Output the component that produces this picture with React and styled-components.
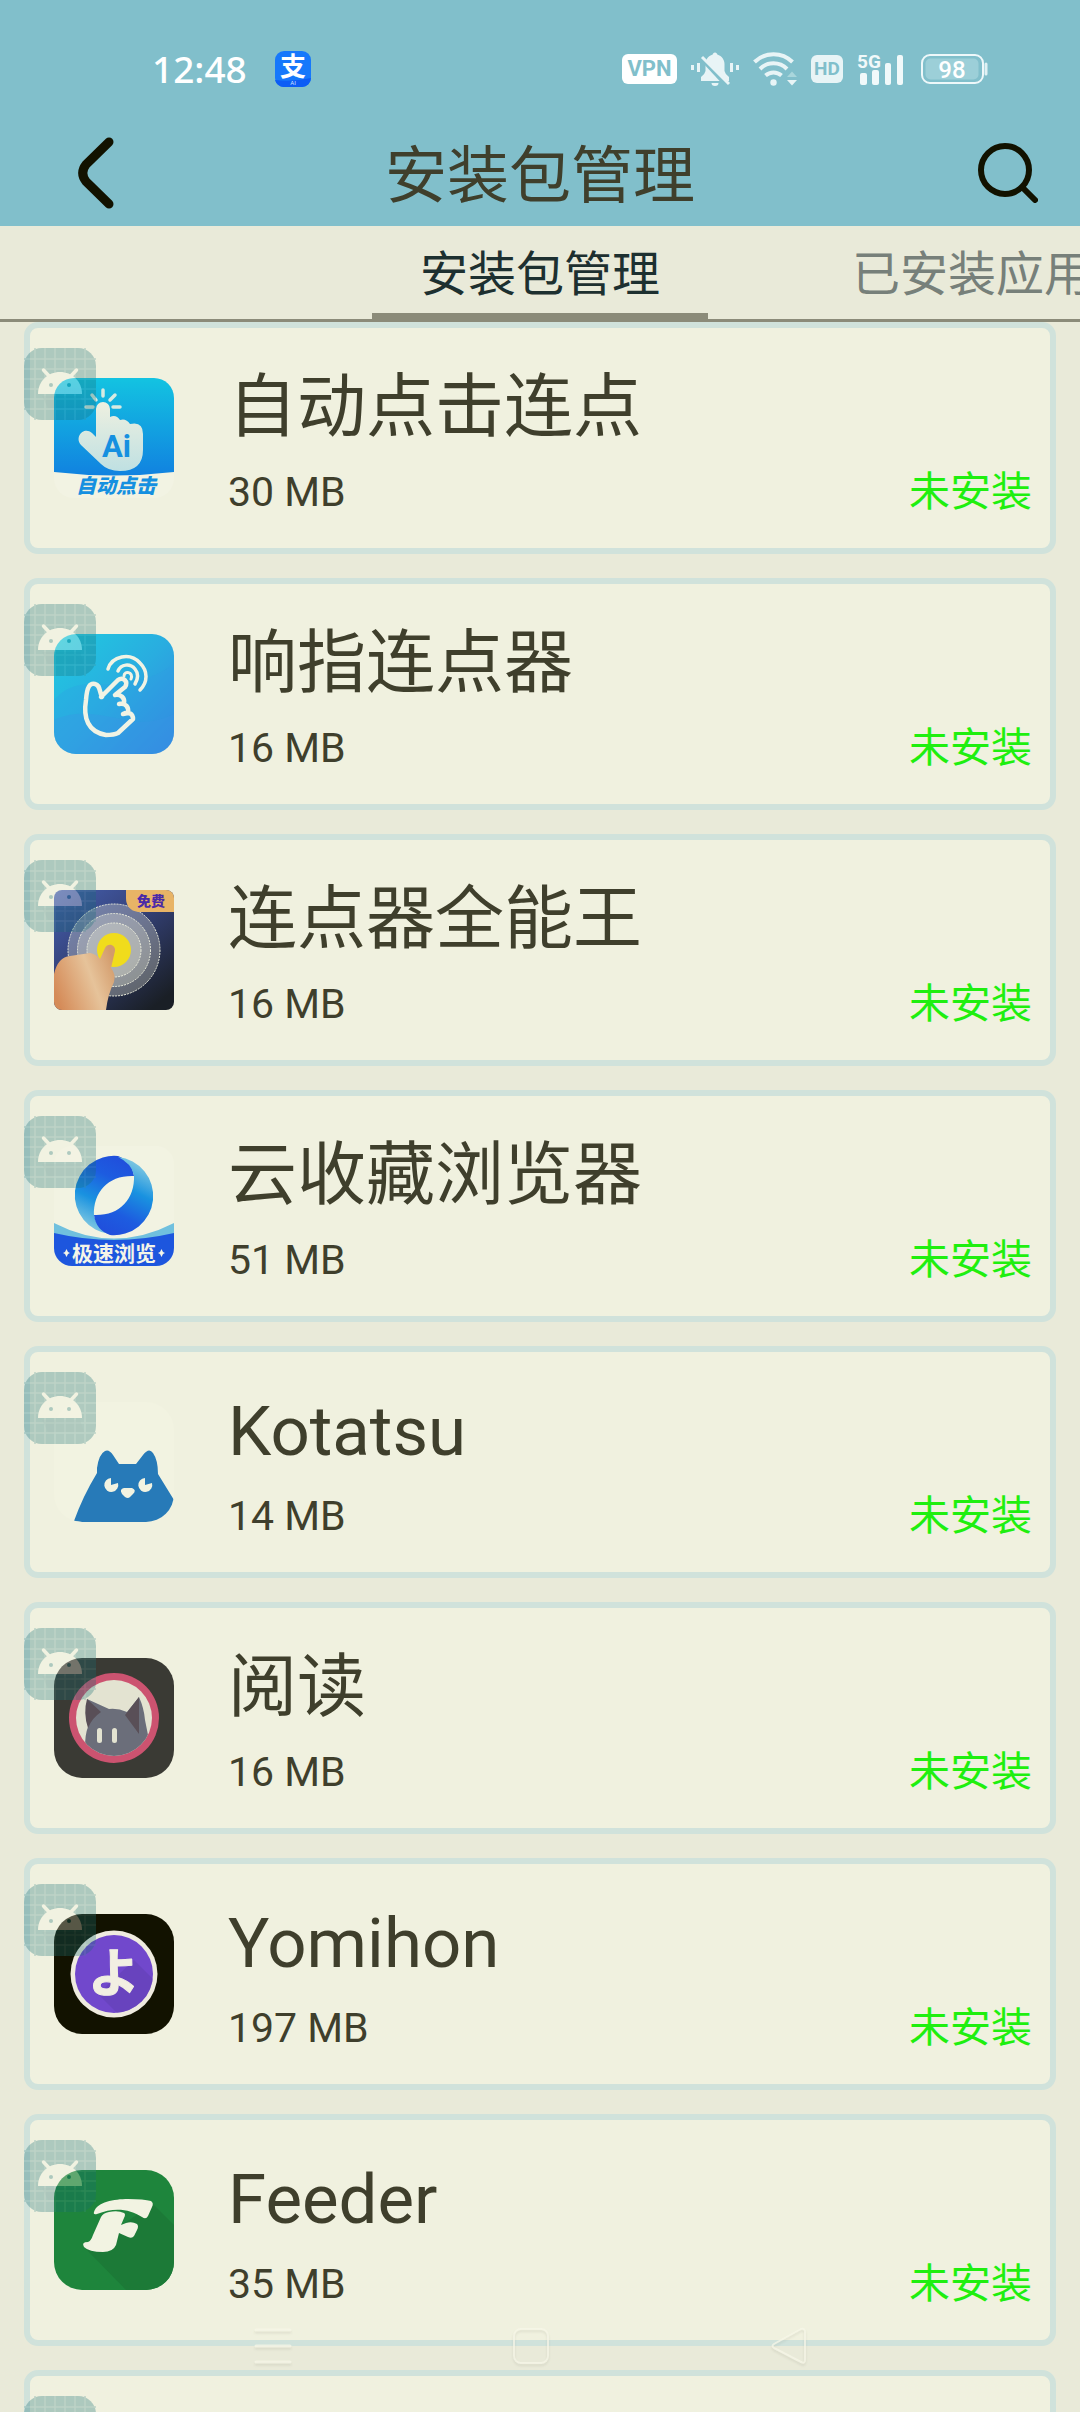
import React from "react";
import styled, { createGlobalStyle } from "styled-components";

const CJK = '"Noto Sans CJK SC"';
const SVG_FONT = 'Roboto, "Noto Sans CJK SC", sans-serif';

const GlobalStyle = createGlobalStyle`
  * {
    box-sizing: border-box;
  }
  body {
    margin: 0;
    background: #e9ead9;
    font-family: Roboto, ${CJK}, sans-serif;
    color: #3f3f2c;
  }
  button {
    border: 0;
    margin: 0;
    padding: 0;
    background: none;
    color: inherit;
    font: inherit;
    cursor: pointer;
  }
  svg {
    display: block;
  }
`;

const Screen = styled.div`
  display: flex;
  flex-direction: column;
  height: 100vh;
  overflow: hidden;
`;

const Header = styled.header`
  background: #81bfcb;
`;

const StatusBar = styled.div`
  display: flex;
  align-items: center;
  justify-content: space-between;
  height: 120px;
  padding: 18px 92px 0 152px;
  color: #fff;
`;

const StatusGroup = styled.div`
  display: flex;
  align-items: center;
  gap: ${(p) => p.$gap}px;
`;

const Clock = styled.time`
  font-family: "Noto Sans", ${CJK}, sans-serif;
  font-size: 37px;
  font-weight: 500;
  line-height: 40px;
`;

const StatusTag = styled.span`
  display: flex;
  align-items: center;
  justify-content: center;
  width: ${(p) => p.$width}px;
  height: ${(p) => p.$height}px;
  border-radius: 6px;
  background: ${(p) => p.$fill};
  color: #81bfcb;
  font-size: ${(p) => p.$text}px;
  font-weight: 700;
  line-height: 28px;
`;

const TitleBar = styled.div`
  display: grid;
  grid-template-columns: 1fr auto 1fr;
  align-items: center;
  height: 106px;
  padding: 0 42px;
`;

const Title = styled.h1`
  margin: 0;
  padding-top: 8px;
  font-size: 62px;
  font-weight: 400;
  line-height: 80px;
`;

const BackButton = styled.button`
  justify-self: start;
  padding-left: 36px;
`;

const SearchButton = styled.button`
  justify-self: end;
`;

const Tabs = styled.nav`
  display: flex;
  flex: none;
  gap: 96px;
  height: 96px;
  padding-left: calc(50% - 168px);
  overflow: hidden;
  border-bottom: 3px solid #8b8b79;
`;

const Tab = styled.button`
  flex: none;
  padding: 10px 48px 0;
  border-bottom: 6px solid ${(p) => (p.$active ? "#8b8b79" : "transparent")};
  color: ${(p) => (p.$active ? "#1d3030" : "#77807a")};
  font-size: 48px;
  line-height: 72px;
`;

const List = styled.ul`
  display: flex;
  flex: 1;
  flex-direction: column;
  gap: 24px;
  min-height: 0;
  margin: 0;
  padding: 0 24px;
  overflow: hidden;
  list-style: none;
`;

const Card = styled.li`
  position: relative;
  display: flex;
  flex: none;
  align-items: center;
  gap: 54px;
  min-height: 232px;
  padding: 30px 18px 30px 24px;
  border: 6px solid #d0e2db;
  border-radius: 14px;
  background: #f0f1df;
`;

const BadgeSlot = styled.span`
  position: absolute;
  top: 20px;
  left: -6px;
  opacity: 0.3;
`;

const Info = styled.div`
  flex: 1;
`;

const AppName = styled.h2`
  margin: 0 0 8px;
  font-size: 69px;
  font-weight: 400;
  line-height: 100px;
`;

const Meta = styled.div`
  display: flex;
  align-items: baseline;
  justify-content: space-between;
  font-size: 41px;
  line-height: 52px;
`;

const InstallState = styled.span`
  color: #1fef0f;
`;

const SystemNav = styled.nav`
  position: fixed;
  right: 0;
  bottom: 46px;
  left: 0;
  display: flex;
  justify-content: center;
  gap: 218px;
  padding-right: 18px;
  color: rgba(247, 247, 232, 0.75);
  filter: drop-shadow(0 2px 1px rgba(60, 60, 40, 0.12));
`;

/* ---------- status icons ---------- */

const AlipayIcon = () => (
  <svg width="36" height="36" viewBox="0 0 36 36">
    <rect width="36" height="36" rx="9" fill="#1678fb" />
    <path d="M0 29Q18 31 36 27V27A9 9 0 0 1 27 36H9A9 9 0 0 1 0 29Z" fill="#0c5cf5" />
    <text x="18" y="25" textAnchor="middle" fontSize="26" fontWeight="700" fill="#fff" fontFamily={SVG_FONT}>支</text>
    <text x="18" y="34" textAnchor="middle" fontSize="6" fill="#cfe0ff" fontFamily={SVG_FONT}>AI</text>
  </svg>
);

const MuteIcon = () => (
  <svg width="48" height="34" viewBox="0 0 48 34" fill="#e8f4f6">
    <path d="M24 0.5C25.5 0.5 26 1.5 26.3 2.5C31 4 33.5 8 33.5 12V19Q34 22 38 25V29H10V25Q14 22 14.500 19V12C14.500 8 17 4 21.700 2.500C22 1.500 22.500 .5 24 .5Z" />
    <path d="M20.500 31H27.500A3.500 3 0 0 1 20.500 31Z" />
    <path d="M9 5L36 34" stroke="#81bfcb" strokeWidth="4" />
    <path d="M11 5L38 32" stroke="#e8f4f6" strokeWidth="3" />
    <rect x="0" y="13" width="3" height="5" />
    <rect x="6" y="11" width="3" height="9" />
    <rect x="39" y="11" width="3" height="9" />
    <rect x="45" y="13" width="3" height="5" />
  </svg>
);

const WifiIcon = () => (
  <svg width="44" height="34" viewBox="0 0 44 34" fill="none" stroke="#e8f4f6" strokeWidth="4">
    <path d="M1.500 10A27 27 0 0 1 39.500 10" />
    <path d="M7 17A19 19 0 0 1 34 17" />
    <path d="M12.500 23.500A12 12 0 0 1 28.500 23.500" />
    <circle cx="20.500" cy="30.500" r="3.200" fill="#e8f4f6" stroke="none" />
    <path d="M34 28H44L39 33.500Z" fill="#e8f4f6" stroke="none" />
    <path d="M34 25H44L39 19.500Z" fill="#a9d6dc" stroke="none" />
  </svg>
);

const SignalIcon = () => (
  <svg width="50" height="36" viewBox="0 0 50 36" fill="#f1f9fa">
    <text x="0" y="17" fontSize="19" fontWeight="700" fontFamily={SVG_FONT}>5G</text>
    <rect x="3" y="22" width="7" height="12" rx="2" />
    <rect x="15" y="19" width="7" height="15" rx="2" />
    <rect x="28" y="12" width="6" height="22" rx="2" />
    <rect x="40" y="4" width="6" height="30" rx="2" />
  </svg>
);

const BatteryIcon = () => (
  <svg width="67" height="30" viewBox="0 0 67 30">
    <rect x="1" y="1" width="61" height="28" rx="8" fill="none" stroke="#eef8fa" strokeWidth="2" />
    <rect x="4.500" y="4.500" width="53" height="21" rx="5" fill="#9ccfd8" />
    <path d="M65 10V20" stroke="#e0f1f4" strokeWidth="3" strokeLinecap="round" />
    <text x="31" y="24" textAnchor="middle" fontSize="24" fontWeight="500" fill="#fff" fontFamily={SVG_FONT}>98</text>
  </svg>
);

/* ---------- toolbar icons ---------- */

const BackIcon = () => (
  <svg width="36" height="72" viewBox="0 0 36 72" fill="none" stroke="#121200" strokeWidth="9" strokeLinecap="round">
    <path d="M31 5L8 27.500Q1.500 36 8 44.500L31 67" />
  </svg>
);

const SearchIcon = () => (
  <svg width="60" height="60" viewBox="0 0 60 60" fill="none" stroke="#121200" strokeWidth="6" strokeLinecap="round">
    <circle cx="27" cy="27" r="24" />
    <path d="M45 45L57 57" />
  </svg>
);

/* ---------- package badge ---------- */

const AndroidBadge = () => (
  <svg width="72" height="72" viewBox="0 0 72 72">
    <rect width="72" height="72" rx="18" fill="#176e74" />
    <path
      d="M11 0V72M21 0V72M31 0V72M41 0V72M51 0V72M61 0V72M0 11H72M0 21H72M0 31H72M0 41H72M0 51H72M0 61H72"
      stroke="#4a9090"
      strokeWidth="1.500"
    />
    <path d="M18 48H56L60 60H24Z" fill="#0c5a60" opacity="0.3" />
    <path d="M14 46C14 33 24 24 36 24S58 33 58 46Z" fill="#f6f6e6" />
    <path d="M19.500 22L26 29M52.500 22L46 29" stroke="#f6f6e6" strokeWidth="3.500" strokeLinecap="round" />
    <circle cx="27" cy="37" r="2" fill="#176e74" />
    <circle cx="45" cy="37" r="2" fill="#176e74" />
  </svg>
);

/* ---------- application icons ---------- */

const IconFrame = styled.svg.attrs({ viewBox: "0 0 120 120", "aria-hidden": true })`
  flex: none;
  width: 120px;
  height: 120px;
  border-radius: ${(p) => p.$radius}px;
`;

const AiTapIcon = () => (
  <IconFrame $radius={20}>
    <defs>
      <linearGradient id="tapSky" x1="0" y1="0" x2="0" y2="1">
        <stop offset="0" stopColor="#13c3e1" />
        <stop offset="1" stopColor="#1182e0" />
      </linearGradient>
      <linearGradient id="tapHand" x1="0" y1="0" x2="0" y2="1">
        <stop offset="0" stopColor="#eef0e0" />
        <stop offset="1" stopColor="#bfe0e2" />
      </linearGradient>
    </defs>
    <rect width="120" height="120" fill="#f2f3e3" />
    <path d="M0 0H120V94Q60 101 0 94Z" fill="url(#tapSky)" />
    <path
      d="M42 31A7 7 0 0 1 56 31V39Q62 36 66 42Q72 40 76 46Q89 43 89 56V72Q89 93 66 93Q54 93 47 86L27 67C20 59 30 48 38 55L42 59Z"
      fill="url(#tapHand)"
    />
    <path d="M49 12V18M38 17L42 22M61 17L56 22M32 29H39M59 29H66" stroke="#d6ebe2" strokeWidth="3.500" strokeLinecap="round" />
    <text x="48" y="79" fontSize="31" fontWeight="700" fill="#1590e0" fontFamily={SVG_FONT}>Ai</text>
    <text x="62" y="115" textAnchor="middle" fontSize="20" fontWeight="900" fontStyle="italic" fill="#1590e0" fontFamily={SVG_FONT}>
      自动点击
    </text>
  </IconFrame>
);

const SnapTapIcon = () => (
  <IconFrame $radius={22}>
    <defs>
      <linearGradient id="snapBg" x1="0" y1="0" x2="1" y2="1">
        <stop offset="0" stopColor="#20cbe0" />
        <stop offset="0.5" stopColor="#29ade0" />
        <stop offset="1" stopColor="#3583e0" />
      </linearGradient>
    </defs>
    <rect width="120" height="120" fill="url(#snapBg)" />
    <path d="M0 66C22 40 50 56 78 48Q105 42 120 30V120H0Z" fill="#2f9ce2" opacity="0.25" />
    <path d="M0 86C30 72 60 86 85 88Q105 88 120 80V120H0Z" fill="#3a95e6" opacity="0.3" />
    <g fill="none" stroke="#f1f3e4" strokeLinecap="round" strokeLinejoin="round">
      <path
        d="M47 63L64 46C69 42 75 48 71 53L61 61C67 60 71 64 70 69L65 70C72 69 75 73 74 79L69 80C75 77 79 80 79 85L64 99Q60 101 52 101C34 98 29 84 32 66C33 52 36 49 41 50C46 51 45 56 48 63"
        strokeWidth="4.500"
      />
      <path d="M54 35C58 22 76 18 86 29C94 37 94 48 86 56" strokeWidth="3.500" />
      <path d="M64 37C67 30 76 29 81 35C85 40 84 45 81 50" strokeWidth="3.500" />
      <path d="M70 42C70 36 80 38 77 45" strokeWidth="3" />
    </g>
  </IconFrame>
);

const TapKingIcon = () => (
  <IconFrame $radius={8}>
    <defs>
      <linearGradient id="kingBg" x1="0" y1="0" x2="0.800" y2="1">
        <stop offset="0" stopColor="#4560b0" />
        <stop offset="0.450" stopColor="#35427a" />
        <stop offset="1" stopColor="#1a1f26" />
      </linearGradient>
      <linearGradient id="kingHand" x1="0" y1="0.700" x2="1" y2="0.300">
        <stop offset="0" stopColor="#d58b58" />
        <stop offset="0.600" stopColor="#e6c39a" />
        <stop offset="1" stopColor="#d39b6b" />
      </linearGradient>
    </defs>
    <rect width="120" height="120" fill="url(#kingBg)" />
    <g fill="#e8ead8" fillOpacity="0.320" stroke="#eceedd" strokeDasharray="2 1">
      <circle cx="60" cy="60" r="46" />
      <circle cx="60" cy="60" r="36.500" />
      <circle cx="60" cy="60" r="27" />
    </g>
    <circle cx="60" cy="60" r="17" fill="#f0dc1c" />
    <path d="M0 84Q4 67 16 66L36 63Q42 64 46 69L51 58C54 52 62 55 61 61L57 78Q62 84 60 92Q54 104 52 120H0Z" fill="url(#kingHand)" />
    <path d="M72 0H120V22H84Q72 20 72 8Z" fill="#e8b466" />
    <text x="97" y="16" textAnchor="middle" fontSize="14" fontWeight="900" fill="#4a2aa8" fontFamily={SVG_FONT}>免费</text>
  </IconFrame>
);

const CloudBrowserIcon = () => (
  <IconFrame $radius={18}>
    <defs>
      <linearGradient id="ringHalf" gradientUnits="userSpaceOnUse" x1="30" y1="84" x2="66" y2="14">
        <stop offset="0" stopColor="#8fd0e2" />
        <stop offset="0.400" stopColor="#1992e0" />
        <stop offset="0.750" stopColor="#1d5ce0" />
        <stop offset="1" stopColor="#2050dc" />
      </linearGradient>
    </defs>
    <rect width="120" height="120" fill="#f2f3e2" />
    <path d="M56 88A39 39 0 0 1 64 10Q78 15 80 30C55 29 39 45 40 70Q43 82 56 88Z" fill="url(#ringHalf)" />
    <path
      d="M56 88A39 39 0 0 1 64 10Q78 15 80 30C55 29 39 45 40 70Q43 82 56 88Z"
      fill="url(#ringHalf)"
      transform="rotate(180 60 49.500)"
    />
    <path d="M0 77Q60 108 120 77V100H0Z" fill="#70c0de" />
    <path d="M0 87Q60 101 120 87V120H0Z" fill="#1d56de" />
    <text x="60" y="115" textAnchor="middle" fontSize="21" fontWeight="700" fill="#f4f5e8" fontFamily={SVG_FONT}>极速浏览</text>
    <path d="M12.500 103L14 106L16 107L14 108L12.500 111L11 108L9 107L11 106ZM107.500 103L109 106L111 107L109 108L107.500 111L106 108L104 107L106 106Z" fill="#f4f5e8" />
  </IconFrame>
);

const KotatsuIcon = () => (
  <IconFrame $radius={28}>
    <rect width="120" height="120" fill="#f2f3e1" />
    <path
      d="M20 119Q29 94 43 71V66Q45 52 51 49Q55 47 59 53L65 62H82L89 53Q95 45 99 51Q104 58 104 72L120 98V120H28Z"
      fill="#277ab8"
    />
    <path d="M57 76V83L64 81A7 7 0 1 1 57 76ZM91 76V83L98 81A7 7 0 1 1 91 76Z" fill="#f2f3e1" />
    <path d="M70 86H78Q83 88 79 92L76 95Q74 97 71 95L68 92Q65 87 70 86Z" fill="#f2f3e1" />
  </IconFrame>
);

const ReaderIcon = () => (
  <IconFrame $radius={28}>
    <defs>
      <clipPath id="readerDisc">
        <circle cx="60" cy="60" r="38" />
      </clipPath>
    </defs>
    <rect width="120" height="120" fill="#3a3a34" />
    <circle cx="60" cy="60" r="45" fill="#cc5370" />
    <g clipPath="url(#readerDisc)">
      <rect width="120" height="120" fill="#e3e3d1" />
      <path d="M31 90Q31 76 34 69L33 41L55 51Q64 50 73 54L85 39Q90 50 91 62L94 77L90 100H31Z" fill="#6b6e7a" />
      <path d="M33 41L47 54Q38 60 34 70Q29 55 33 41ZM85 39L71 57L85 76Z" fill="#594f57" />
      <rect x="43" y="70" width="5" height="15" rx="2.500" fill="#e3e3d1" />
      <rect x="58" y="70" width="5" height="15" rx="2.500" fill="#e3e3d1" />
    </g>
  </IconFrame>
);

const YomihonIcon = () => (
  <IconFrame $radius={28}>
    <defs>
      <clipPath id="yomiDisc">
        <circle cx="60" cy="60" r="39" />
      </clipPath>
    </defs>
    <rect width="120" height="120" fill="#121200" />
    <circle cx="60" cy="60" r="43.500" fill="#efebdf" />
    <circle cx="60" cy="60" r="39" fill="#7148cc" />
    <path d="M80 46L110 76V110H74L44 80Z" fill="#6541b8" opacity="0.700" clipPath="url(#yomiDisc)" />
    <text
      x="60"
      y="78"
      textAnchor="middle"
      fontSize="52"
      fontWeight="700"
      fill="#f2efe2"
      stroke="#f2efe2"
      strokeWidth="1"
      strokeLinejoin="round"
      fontFamily='"Noto Sans CJK JP", sans-serif'
    >
      よ
    </text>
  </IconFrame>
);

const FeederIcon = () => (
  <IconFrame $radius={28}>
    <rect width="120" height="120" fill="#1e853c" />
    <path d="M99 34L120 55V120H72L32 79Z" fill="#1c7a37" />
    <g fill="#f2f3e2">
      <path d="M40 42C43 32 60 29 74 29Q90 29 97 31Q100 33 98 37L94 46Q92 50 88 47C76 39 60 37 43 44Q39 45 40 42Z" />
      <path d="M47 47Q49 43 55 42Q64 40 70 43Q72 44 70 48L67 55L72 53Q78 51 83 54Q85 56 83 60L80 66Q78 69 74 67L65 63L62 75Q59 82 49 82Q35 82 30 77Q27 72 34 72Q37 71 39 65Z" />
    </g>
  </IconFrame>
);

/* ---------- system navigation icons ---------- */

const RecentsIcon = () => (
  <svg width="40" height="40" viewBox="0 0 40 40" stroke="currentColor" strokeWidth="3" strokeLinecap="round">
    <path d="M3 4H37M3 20H37M3 36H37" />
  </svg>
);

const HomeIcon = () => (
  <svg width="40" height="40" viewBox="0 0 40 40" fill="none" stroke="currentColor" strokeWidth="2">
    <rect x="3" y="3" width="34" height="34" rx="7" />
  </svg>
);

const NavBackIcon = () => (
  <svg width="40" height="40" viewBox="0 0 40 40" fill="none" stroke="currentColor" strokeWidth="2" strokeLinejoin="round">
    <path d="M32 3Q36 2 36 6V34Q36 38 32 36L5 22Q2 20 5 18Z" />
  </svg>
);

const packages = [
  { name: "自动点击连点", size: "30 MB", Icon: AiTapIcon },
  { name: "响指连点器", size: "16 MB", Icon: SnapTapIcon },
  { name: "连点器全能王", size: "16 MB", Icon: TapKingIcon },
  { name: "云收藏浏览器", size: "51 MB", Icon: CloudBrowserIcon },
  { name: "Kotatsu", size: "14 MB", Icon: KotatsuIcon },
  { name: "阅读", size: "16 MB", Icon: ReaderIcon },
  { name: "Yomihon", size: "197 MB", Icon: YomihonIcon },
  { name: "Feeder", size: "35 MB", Icon: FeederIcon },
];

function PackageCard({ item }) {
  const { name, size, Icon } = item;
  return (
    <Card>
      <Icon />
      <Info>
        <AppName>{name}</AppName>
        <Meta>
          <span>{size}</span>
          <InstallState>未安装</InstallState>
        </Meta>
      </Info>
      <BadgeSlot>
        <AndroidBadge />
      </BadgeSlot>
    </Card>
  );
}

export default function App() {
  return (
    <Screen>
      <GlobalStyle />
      <Header>
        <StatusBar>
          <StatusGroup $gap={28}>
            <Clock>12:48</Clock>
            <AlipayIcon />
          </StatusGroup>
          <StatusGroup $gap={14}>
            <StatusTag $width={55} $height={30} $text={22} $fill="#fff">VPN</StatusTag>
            <MuteIcon />
            <WifiIcon />
            <StatusTag $width={32} $height={28} $text={19} $fill="#e8f4f6">HD</StatusTag>
            <SignalIcon />
            <BatteryIcon />
          </StatusGroup>
        </StatusBar>
        <TitleBar>
          <BackButton type="button" aria-label="返回">
            <BackIcon />
          </BackButton>
          <Title>安装包管理</Title>
          <SearchButton type="button" aria-label="搜索">
            <SearchIcon />
          </SearchButton>
        </TitleBar>
      </Header>
      <Tabs>
        <Tab type="button" $active aria-current="page">安装包管理</Tab>
        <Tab type="button">已安装应用</Tab>
      </Tabs>
      <List>
        {packages.map((item) => (
          <PackageCard key={item.name} item={item} />
        ))}
        <Card>
          <BadgeSlot>
            <AndroidBadge />
          </BadgeSlot>
        </Card>
      </List>
      <SystemNav>
        <button type="button" aria-label="最近任务"><RecentsIcon /></button>
        <button type="button" aria-label="主页"><HomeIcon /></button>
        <button type="button" aria-label="后退"><NavBackIcon /></button>
      </SystemNav>
    </Screen>
  );
}
